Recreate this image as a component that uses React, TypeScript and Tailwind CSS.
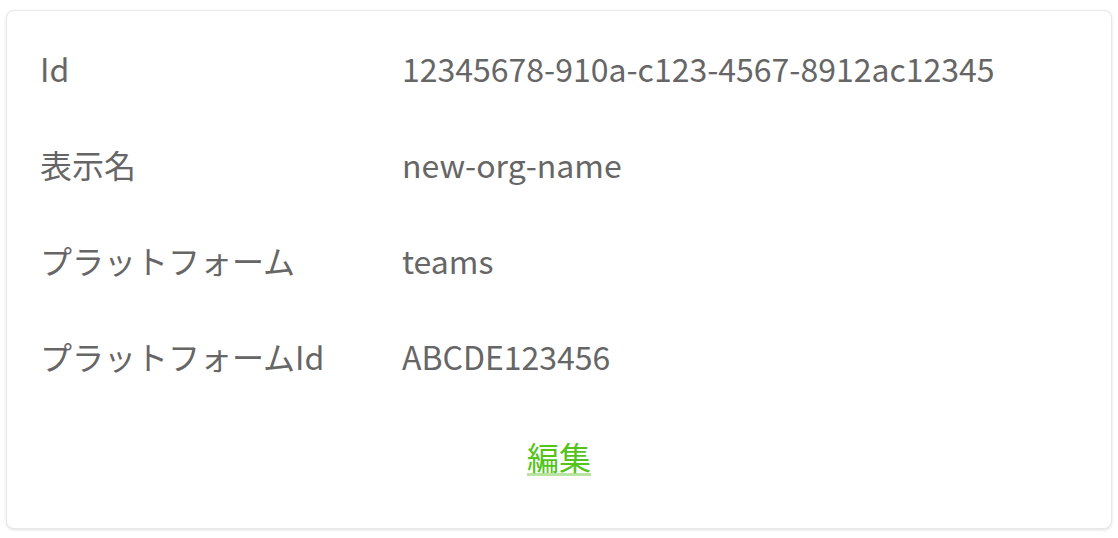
import React from "react";

const rows: [string, string][] = [
  ["Id", "12345678-910a-c123-4567-8912ac12345"],
  ["表示名", "new-org-name"],
  ["プラットフォーム", "teams"],
  ["プラットフォームId", "ABCDE123456"],
];

export default function App() {
  return (
    <div
      className="w-[1118px] h-[538px] bg-white pt-[10px] pl-[6px]"
      style={{ fontFamily: '"Noto Sans CJK JP", "Noto Sans", sans-serif' }}
    >
      <div className="w-[1106px] h-[519px] bg-white border border-[#e8e8e8] rounded-lg shadow-[0_1px_3px_rgba(0,0,0,0.12)] pt-[9px] pl-[33px] flex flex-col">
        {rows.map(([label, value]) => (
          <div key={label} className="h-[96px] flex items-center text-[32px] text-[#666666]">
            <div className="w-[362px]">{label}</div>
            <div>{value}</div>
          </div>
        ))}
        <div className="h-[104px] flex items-center justify-center pr-[33px]">
          <a
            href="#"
            className="text-[32px] text-[#52c41a] underline decoration-[#b7e4a0] decoration-[3px] underline-offset-[3px]"
          >
            編集
          </a>
        </div>
      </div>
    </div>
  );
}
